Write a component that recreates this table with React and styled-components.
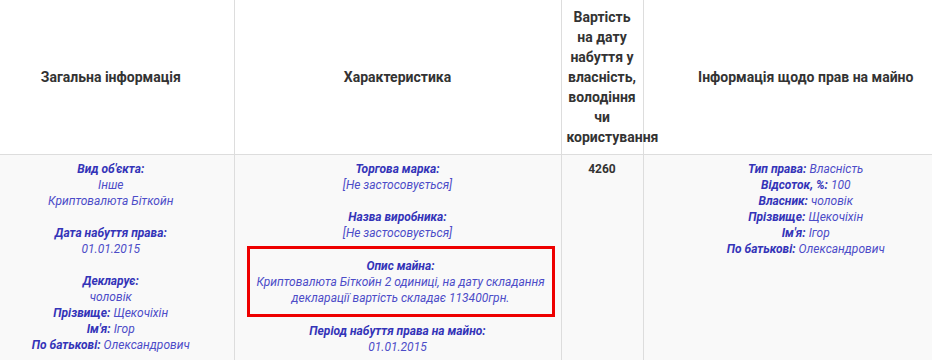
import styled, { createGlobalStyle } from "styled-components";

const GlobalStyle = createGlobalStyle`
  html, body {
    margin: 0;
    padding: 0;
    overflow: hidden;
    background: #ffffff;
  }
  body {
    font-family: Roboto, "Liberation Sans", sans-serif;
  }
`;

const Wrapper = styled.div`
  width: 932px;
  height: 360px;
  overflow: hidden;
  background: #f9f9f9;
`;

// the page is scrolled a little to the right, so the first column is cut
const Table = styled.table`
  margin-left: -12px;
  width: 980px;
  table-layout: fixed;
  border-collapse: collapse;
  border-spacing: 0;
`;

const HeadCell = styled.th`
  width: ${(p) => p.$width}px;
  height: 154px;
  padding: 7px 5px;
  background: #ffffff;
  border-right: 1px solid #dddddd;
  border-bottom: 1px solid #dddddd;
  font-size: 14px;
  line-height: 20px;
  font-weight: 700;
  color: #333333;
  text-align: center;
  vertical-align: middle;
  box-sizing: border-box;

  &:last-child {
    border-right: none;
  }
`;

const Cell = styled.td`
  padding: 6px 5px;
  border-right: 1px solid #dddddd;
  background: #f9f9f9;
  font-size: 12px;
  line-height: 16px;
  text-align: center;
  vertical-align: top;
  height: 220px;

  &:last-child {
    border-right: none;
  }
`;

const Group = styled.div`
  margin-bottom: 16px;
`;

const Highlight = styled.div`
  margin: 5px 1px 6px 7px;
  padding: 9px 4px 8px;
  border: 3px solid #ee0000;
`;

const Line = styled.div`
  white-space: nowrap;
`;

const Label = styled.span`
  font-weight: 700;
  font-style: italic;
  color: #3434b8;
`;

const Value = styled.span`
  font-style: italic;
  color: #4c4cc8;
`;

const Amount = styled.span`
  font-weight: 700;
  color: #333333;
`;

function Field({ label, value }) {
  return (
    <Line>
      <Label>{label}:</Label> <Value>{value}</Value>
    </Line>
  );
}

function Block({ label, values }) {
  return (
    <>
      <Line>
        <Label>{label}:</Label>
      </Line>
      {values.map((v) => (
        <Line key={v}>
          <Value>{v}</Value>
        </Line>
      ))}
    </>
  );
}

export default function App() {
  return (
    <>
      <GlobalStyle />
      <Wrapper>
        <Table>
          <thead>
            <tr>
              <HeadCell $width={246}>Загальна інформація</HeadCell>
              <HeadCell $width={327}>Характеристика</HeadCell>
              <HeadCell $width={82}>
                Вартість на дату набуття у власність, володіння чи
                користування
              </HeadCell>
              <HeadCell $width={325}>Інформація щодо прав на майно</HeadCell>
            </tr>
          </thead>
          <tbody>
            <tr>
              <Cell>
                <Group>
                  <Block
                    label="Вид об'єкта"
                    values={["Інше", "Криптовалюта Біткойн"]}
                  />
                </Group>
                <Group>
                  <Block label="Дата набуття права" values={["01.01.2015"]} />
                </Group>
                <Group>
                  <Block label="Декларує" values={["чоловік"]} />
                  <Field label="Прізвище" value="Щекочіхін" />
                  <Field label="Ім'я" value="Ігор" />
                  <Field label="По батькові" value="Олександрович" />
                </Group>
              </Cell>
              <Cell>
                <Group>
                  <Block
                    label="Торгова марка"
                    values={["[Не застосовується]"]}
                  />
                </Group>
                <Block
                  label="Назва виробника"
                  values={["[Не застосовується]"]}
                />
                <Highlight>
                  <Block
                    label="Опис майна"
                    values={[
                      "Криптовалюта Біткойн 2 одиниці, на дату складання",
                      "декларації вартість складає 113400грн.",
                    ]}
                  />
                </Highlight>
                <Block
                  label="Період набуття права на майно"
                  values={["01.01.2015"]}
                />
              </Cell>
              <Cell>
                <Amount>4260</Amount>
              </Cell>
              <Cell>
                <Field label="Тип права" value="Власність" />
                <Field label="Відсоток, %" value="100" />
                <Field label="Власник" value="чоловік" />
                <Field label="Прізвище" value="Щекочіхін" />
                <Field label="Ім'я" value="Ігор" />
                <Field label="По батькові" value="Олександрович" />
              </Cell>
            </tr>
          </tbody>
        </Table>
      </Wrapper>
    </>
  );
}
